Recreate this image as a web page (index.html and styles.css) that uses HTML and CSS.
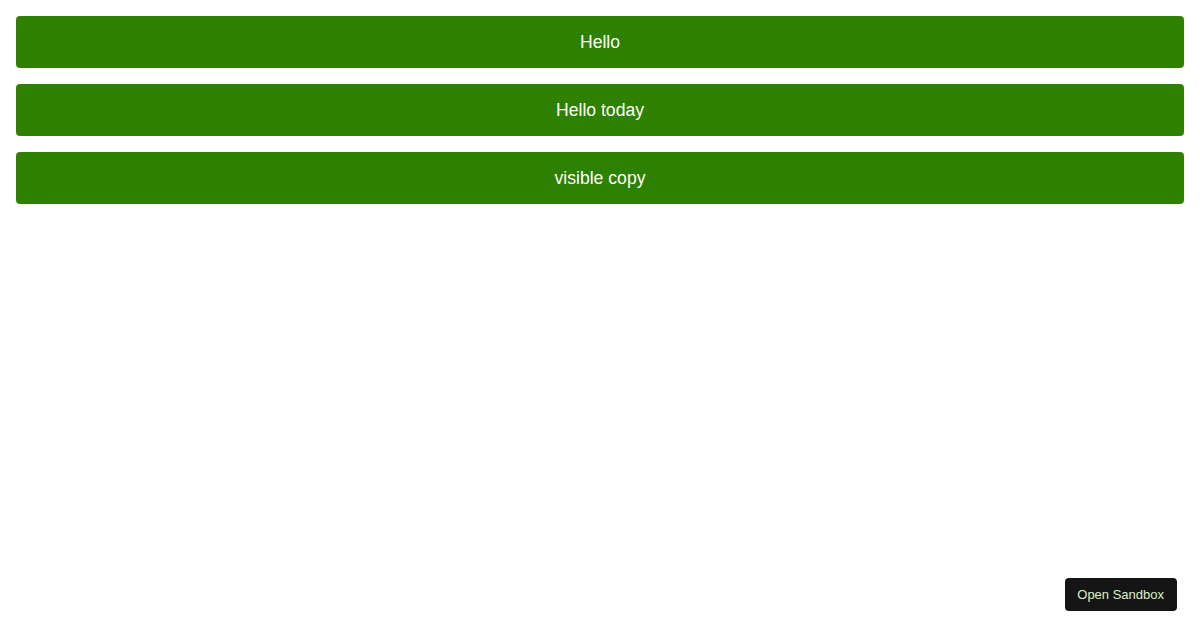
FILE: index.html
```html
<!DOCTYPE html>
<html>
<head>
<meta charset="utf-8">
<link rel="stylesheet" href="styles.css">
</head>
<body>
<div class="stack">
  <button class="btn">Hello</button>
  <button class="btn">Hello today</button>
  <button class="btn">visible copy</button>
</div>
<a class="sandbox">Open Sandbox</a>
</body>
</html>
```
FILE: styles.css
```css
html, body { margin: 0; padding: 0; background: #fff; }
body { padding: 16px; font-family: "Liberation Sans", Arial, sans-serif; }
.stack { display: flex; flex-direction: column; gap: 16px; }
.btn {
  height: 52px;
  border: none;
  border-radius: 4px;
  background: #2e8000;
  color: #fff;
  font-family: "Liberation Sans", Arial, sans-serif;
  font-size: 17.6px;
  font-weight: normal;
  padding: 1px 0 0 0;
}
.sandbox {
  position: fixed;
  right: 23px;
  bottom: 19px;
  height: 33px;
  padding: 0 13px 0 12px;
  display: flex;
  align-items: center;
  background: #151515;
  color: #d8f2c8;
  font-family: "Liberation Sans", Arial, sans-serif;
  font-size: 13px;
  border-radius: 4px;
}
```
